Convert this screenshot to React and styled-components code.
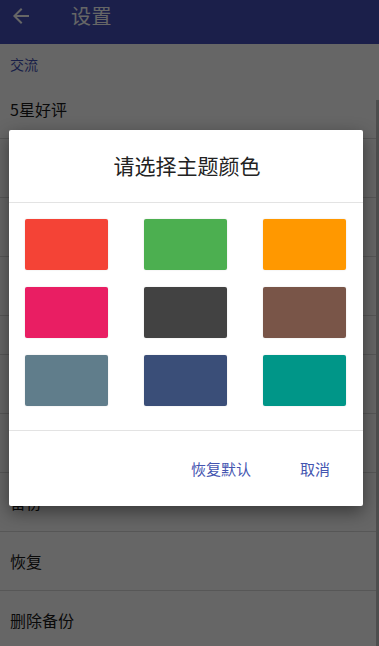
import React from "react";
import styled, { createGlobalStyle } from "styled-components";

const GlobalStyle = createGlobalStyle`
  html, body {
    margin: 0;
    padding: 0;
    background: #ffffff;
  }
  body {
    font-family: "Roboto", "Noto Sans CJK SC", sans-serif;
  }
  * {
    box-sizing: border-box;
  }
`;

const sections = [
  {
    title: "交流",
    rows: ["5星好评", "分享给好友", "意见反馈", "关于"],
  },
  {
    title: "数据",
    rows: ["导出", "导入", "备份", "恢复", "删除备份"],
  },
];

const colors = [
  "#F44336",
  "#4CAF50",
  "#FF9800",
  "#E91E63",
  "#424242",
  "#795548",
  "#607D8B",
  "#3A4E78",
  "#009688",
];

function App() {
  return (
    <Page>
      <GlobalStyle />
      {/* toolbar */}
      <Toolbar>
        <BackButton>
          <svg width="24" height="24" viewBox="0 0 24 24">
            <path
              d="M20 11H7.83l5.59-5.59L12 4l-8 8 8 8 1.41-1.41L7.83 13H20v-2z"
              fill="currentColor"
            />
          </svg>
        </BackButton>
        <Title>设置</Title>
      </Toolbar>

      {/* list */}
      <List>
        {sections.map((s, i) => (
          <Section key={s.title}>
            <SectionTitle first={i === 0}>{s.title}</SectionTitle>
            {s.rows.map((r) => (
              <Row key={r}>{r}</Row>
            ))}
          </Section>
        ))}
        <ScrollThumb />
      </List>

      {/* dim + dialog */}
      <Scrim>
        <Dialog>
          <DialogTitle>请选择主题颜色</DialogTitle>
          <Swatches>
            {colors.map((c) => (
              <Swatch key={c} color={c} />
            ))}
          </Swatches>
          <Actions>
            <ActionButton>恢复默认</ActionButton>
            <ActionButton>取消</ActionButton>
          </Actions>
        </Dialog>
      </Scrim>
    </Page>
  );
}

export default App;

const Page = styled.div`
  width: 379px;
  height: 646px;
  overflow: hidden;
  position: relative;
  background: #ffffff;
`;

const Toolbar = styled.header`
  height: 44px;
  background: #444fba;
  display: flex;
  align-items: center;
  padding-left: 9px;
`;

const BackButton = styled.div`
  width: 24px;
  height: 24px;
  color: #ffffff;
  display: flex;
  align-items: center;
  justify-content: center;
  margin-top: -13px;
`;

const Title = styled.h1`
  margin: -13px 0 0 38px;
  font-family: "Noto Sans CJK SC", sans-serif;
  font-weight: 400;
  font-size: 20px;
  color: #ffffff;
  letter-spacing: 0.5px;
`;

const List = styled.div`
  position: relative;
  height: 602px;
`;

const Section = styled.section`
  display: flex;
  flex-direction: column;
`;

const SectionTitle = styled.div`
  height: ${(p) => (p.first ? "36px" : "39px")};
  display: flex;
  align-items: flex-end;
  padding: 0 0 6px 10px;
  font-family: "Noto Sans CJK SC", sans-serif;
  font-size: 14px;
  color: #3f51b5;
  border-bottom: ${(p) => (p.first ? "none" : "1px solid #d9d9d9")};
`;

const Row = styled.div`
  height: 59px;
  display: flex;
  align-items: center;
  padding-left: 10px;
  font-family: "Noto Sans CJK SC", sans-serif;
  font-size: 16px;
  color: #1a1a1a;
  border-bottom: 1px solid #d9d9d9;
`;

const ScrollThumb = styled.div`
  position: absolute;
  right: 0;
  top: 56px;
  bottom: 0;
  width: 3px;
  background: #c4c4c4;
`;

const Scrim = styled.div`
  position: absolute;
  inset: 0;
  background: rgba(0, 0, 0, 0.6);
  display: flex;
  justify-content: center;
  align-items: flex-start;
  padding-top: 130px;
`;

const Dialog = styled.div`
  width: 354px;
  margin-left: -7px;
  background: #ffffff;
  border-radius: 2px;
  box-shadow: 0 6px 18px rgba(0, 0, 0, 0.45);
  display: flex;
  flex-direction: column;
`;

const DialogTitle = styled.div`
  height: 73px;
  display: flex;
  align-items: center;
  justify-content: center;
  padding: 0 0 2px 2px;
  font-family: "Noto Sans CJK SC", sans-serif;
  font-size: 21px;
  color: #222222;
  border-bottom: 1px solid #e3e3e3;
`;

const Swatches = styled.div`
  display: grid;
  grid-template-columns: repeat(3, 83px);
  column-gap: 36px;
  row-gap: 17px;
  padding: 16px 16px 24px 16px;
  border-bottom: 1px solid #e3e3e3;
`;

const Swatch = styled.div`
  height: 51px;
  border-radius: 2px;
  background: ${(p) => p.color};
  box-shadow: 0 0 2px rgba(0, 0, 0, 0.12);
`;

const Actions = styled.div`
  height: 75px;
  display: flex;
  justify-content: flex-end;
  align-items: center;
  gap: 17px;
  padding-right: 17px;
`;

const ActionButton = styled.button`
  border: none;
  background: transparent;
  padding: 0 16px;
  height: 40px;
  font-family: "Noto Sans CJK SC", sans-serif;
  font-size: 15px;
  color: #4454b0;
  cursor: pointer;
`;
